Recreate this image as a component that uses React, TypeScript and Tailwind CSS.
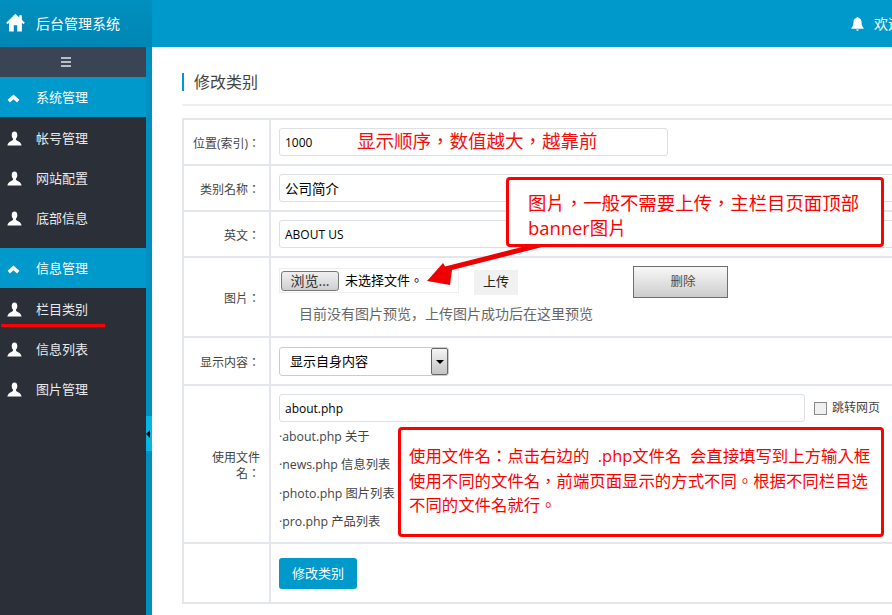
import { ReactNode } from "react";

function HomeIcon() {
  return (
    <svg width="19" height="19" viewBox="0 0 20 20" fill="#fff">
      <path d="M10 0.8 0.2 10.2 1.6 11.8 3.3 10.3V19.4H8.2V13H11.8V19.4H16.7V10.3L18.4 11.8 19.8 10.2 16.7 7.2V2.4H14V4.7Z" />
    </svg>
  );
}

function UserIcon() {
  return (
    <svg width="15" height="15" viewBox="0 0 16 16" fill="#fff">
      <path d="M8 0.5C5.9 0.5 5 2.2 5 4.2 5 6 5.7 7.3 6.4 8.2V9.5C5 10.6 1.2 11.2 0.4 15.5H15.6C14.8 11.2 11 10.6 9.6 9.5V8.2C10.3 7.3 11 6 11 4.2 11 2.2 10.1 0.5 8 0.5Z" />
    </svg>
  );
}

function ChevronUp() {
  return (
    <svg width="13" height="9" viewBox="0 0 14 10" fill="#fff">
      <path d="M7 0.5 13.5 6.5 11 9.5 7 5.8 3 9.5 0.5 6.5Z" />
    </svg>
  );
}

function BellIcon() {
  return (
    <svg width="13" height="16" viewBox="0 0 14 16" fill="#fff">
      <path d="M7 0.5C6.2 0.5 5.8 1 5.8 1.6 3.6 2.2 2.6 4 2.6 6.4 2.6 9.5 1.6 11 0.4 12.2V13.2H13.6V12.2C12.4 11 11.4 9.5 11.4 6.4 11.4 4 10.4 2.2 8.2 1.6 8.2 1 7.8 0.5 7 0.5Z" />
      <path d="M5.6 14H8.4C8.3 14.9 7.7 15.4 7 15.4 6.3 15.4 5.7 14.9 5.6 14Z" />
    </svg>
  );
}

function MenuGroup({ title, items }: { title: string; items: string[] }) {
  return (
    <div>
      <div className="h-10 flex items-center bg-[#0099cc] text-white text-[13px] pt-[2px]">
        <span className="w-9 pl-[7px] flex items-center"><ChevronUp /></span>
        <span>{title}</span>
      </div>
      <ul className="pb-[11px]">
        {items.map((item) => (
          <li key={item} className="h-10 flex items-center pt-1 text-[#e8eaec] text-[13px]">
            <span className="w-9 pl-[7px] flex items-center -mt-[2px]"><UserIcon /></span>
            <span>{item}</span>
          </li>
        ))}
      </ul>
    </div>
  );
}

function Row({ label, height, children }: { label: ReactNode; height: string; children: ReactNode }) {
  return (
    <div className={`flex border-b-2 border-[#e3e7ec] ${height}`}>
      <div className="w-[85px] shrink-0 flex items-center justify-end text-right whitespace-nowrap text-[12px] leading-[16px] text-[#444] pt-1 pr-[9px] [font-family:'Open_Sans','Noto_Sans_CJK_TC',sans-serif]">
        {label}
      </div>
      <div className="flex-1 border-l-2 border-[#e3e7ec] pl-2 min-w-0">{children}</div>
    </div>
  );
}

export default function App() {
  return (
    <div className="relative w-[892px] h-[615px] overflow-hidden bg-white text-[#333] [font-family:'Open_Sans','Noto_Sans_CJK_SC',sans-serif]">
      {/* Header */}
      <header className="h-[47px] flex bg-[#0099cc]">
        <div className="w-[152px] flex items-center bg-gradient-to-b from-[#0090bf] to-[#0086b3] text-white text-[14px]">
          <span className="w-9 pl-[6px] flex items-center -mt-[2px]"><HomeIcon /></span>
          <span>后台管理系统</span>
        </div>
        <div className="flex-1 flex items-center justify-end text-white text-[14px] overflow-hidden">
          <div className="flex items-center w-[41px] shrink-0 overflow-hidden">
            <span className="w-[23px] shrink-0 flex items-center"><BellIcon /></span>
            <span className="whitespace-nowrap">欢迎</span>
          </div>
        </div>
      </header>

      <div className="flex h-[568px]">
        {/* Sidebar */}
        <aside className="relative w-[152px] shrink-0 flex bg-[#0090bf]">
          <div className="w-[146px] bg-[#2a2f38]">
            <div className="h-[30px] bg-[#3a4454] flex items-center justify-center pr-[14px]">
              <div className="w-[10px] flex flex-col gap-[2px]">
                <span className="h-[2px] bg-[#b8bec6]" />
                <span className="h-[2px] bg-[#b8bec6]" />
                <span className="h-[2px] bg-[#b8bec6]" />
              </div>
            </div>
            <MenuGroup title="系统管理" items={["帐号管理", "网站配置", "底部信息"]} />
            <MenuGroup title="信息管理" items={["栏目类别", "信息列表", "图片管理"]} />
          </div>
          <div className="absolute left-[146px] top-[369px] w-[6px] h-[35px] bg-[#00b7e6] flex items-center">
            <span className="border-y-[4px] border-r-[4px] border-y-transparent border-r-black" />
          </div>
        </aside>

        {/* Content */}
        <main className="flex-1 min-w-0 pl-[30px] overflow-hidden">
          <div className="h-[59px] pt-[26px] border-b-2 border-[#eef0f3]">
            <h1 className="border-l-[2px] border-[#0099cc] pl-[10px] h-[18px] leading-[18px] text-[16px] text-[#444]">修改类别</h1>
          </div>
          <div className="mt-[12px] w-[760px] border-2 border-b-0 border-r-0 border-[#e3e7ec]">
            <Row label="位置(索引)：" height="h-[46px]">
              <div className="pt-2">
                <div className="w-[389px] h-[28px] border border-[#dcdfe3] rounded-[3px] flex items-center px-[5px] pt-[2px] text-[12px] text-black">1000</div>
              </div>
            </Row>
            <Row label="类别名称：" height="h-[46px]">
              <div className="pt-2">
                <div className="w-[640px] h-[28px] border border-[#dcdfe3] rounded-[3px] flex items-center px-[5px] pt-[2px] text-[13.5px] text-black">公司简介</div>
              </div>
            </Row>
            <Row label="英文：" height="h-[46px]">
              <div className="pt-2">
                <div className="w-[640px] h-[28px] border border-[#dcdfe3] rounded-[3px] flex items-center px-[5px] pt-[2px] text-[12px] text-black">ABOUT US</div>
              </div>
            </Row>
            <Row label="图片：" height="h-[80px]">
              <div className="pt-[10px]">
                <div className="flex items-start">
                  <div className="w-[180px] h-[25px] border border-[#eee] flex items-center text-[13px] text-black">
                    <span className="w-[58px] h-[20px] ml-[1px] border border-[#777] rounded-[3px] bg-gradient-to-b from-[#f0f0f0] to-[#cfcfcf] flex items-center justify-center text-[14px] text-[#333]">浏览...</span>
                    <span className="ml-[6px] [font-family:'Open_Sans','Noto_Sans_CJK_TC',sans-serif]">未选择文件。</span>
                  </div>
                  <div className="ml-[15px] mt-[2px] w-[44px] h-[25px] bg-[#f1f1f1] flex items-center justify-center pb-[2px] text-[13px] text-[#222]">上传</div>
                  <div className="ml-[115px] -mt-[2px] w-[95px] h-[32px] border border-[#6e6e6e] bg-gradient-to-b from-[#f8f8f8] to-[#cdcdcd] flex items-center justify-center pl-[5px] text-[12.5px] text-[#5b4a1e]">删除</div>
                </div>
                <p className="mt-[6px] pl-5 text-[14px] leading-[20px] text-[#666]">目前没有图片预览，上传图片成功后在这里预览</p>
              </div>
            </Row>
            <Row label="显示内容：" height="h-[48px]">
              <div className="pt-[9px]">
                <div className="w-[170px] h-[29px] border border-[#ccc] rounded-[3px] flex items-center pl-[10px] text-[13px] text-black">
                  <span className="flex-1">显示自身内容</span>
                  <span className="w-[17px] h-[27px] border border-[#666] rounded-[2px] bg-gradient-to-b from-[#f4f4f4] to-[#c4c4c4] flex items-center justify-center">
                    <span className="border-x-[4px] border-t-[4px] border-x-transparent border-t-black" />
                  </span>
                </div>
              </div>
            </Row>
            <Row label={<>使用文件<br />名：</>} height="h-[158px]">
              <div className="pt-2">
                <div className="flex items-center">
                  <div className="w-[526px] h-[28px] border border-[#dcdfe3] rounded-[3px] flex items-center px-[5px] pt-[2px] text-[12px] text-black">about.php</div>
                  <span className="ml-[9px] w-[13px] h-[13px] border border-[#888] bg-[#f0f0f0]" />
                  <span className="ml-[5px] text-[12px] text-[#444]">跳转网页</span>
                </div>
                <ul className="pt-px text-[12.3px] text-[#444] leading-[28.4px]">
                  <li>·about.php 关于</li>
                  <li>·news.php 信息列表</li>
                  <li>·photo.php 图片列表</li>
                  <li>·pro.php 产品列表</li>
                </ul>
              </div>
            </Row>
            <Row label="" height="h-[60px]">
              <div className="pt-[14px]">
                <button className="w-[78px] h-[31px] rounded-[3px] bg-[#0099cc] text-white text-[13px]">修改类别</button>
              </div>
            </Row>
          </div>
        </main>
      </div>

      {/* Annotations drawn over the page */}
      <div className="[font-family:'Open_Sans','Noto_Sans_CJK_TC',sans-serif]">
        <span className="absolute left-[357px] top-[131px] whitespace-nowrap text-[18.5px] leading-[20px] text-[#f01010]">显示顺序，数值越大，越靠前</span>
        <svg className="absolute left-[420px] top-[240px]" width="130" height="50" viewBox="0 0 130 50" fill="#ee0000">
          <path d="M7 41 23 23 25 26.5 130 0 130 5 32 30 30 45Z" />
        </svg>
        <div className="absolute left-[506px] top-[177px] w-[378px] h-[70px] border-[3px] border-[#ff0000] rounded-[4px] bg-white pl-[19px] pt-[10px] whitespace-nowrap text-[18.4px] leading-[25px] text-[#ff0000]">
          图片，一般不需要上传，主栏目页面顶部<br />banner图片
        </div>
        <div className="absolute left-[398px] top-[427px] w-[486px] h-[110px] border-[3px] border-[#ff0000] rounded-[4px] bg-white pl-[8px] pt-[14px] whitespace-nowrap text-[16.4px] leading-[24.5px] text-[#ff0000]">
          使用文件名：点击右边的 &nbsp;.php文件名 &nbsp;会直接填写到上方输入框<br />
          使用不同的文件名，前端页面显示的方式不同。根据不同栏目选<br />
          不同的文件名就行。
        </div>
      </div>
      <div className="absolute left-[1px] top-[324px] w-[104px] h-[3px] bg-[#ff0000]" />
    </div>
  );
}
